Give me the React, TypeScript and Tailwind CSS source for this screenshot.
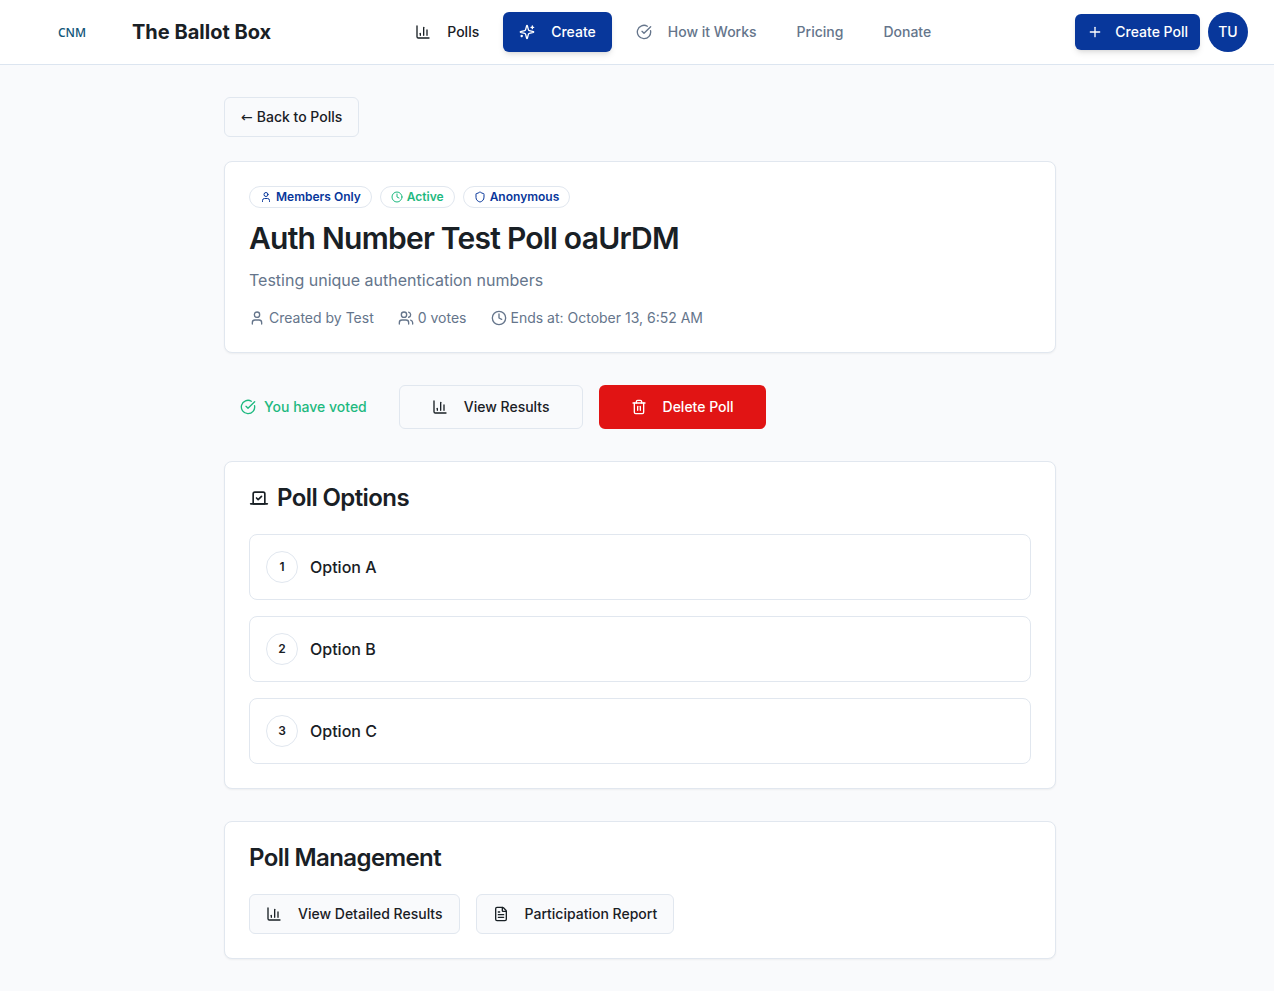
import type { ReactNode } from "react";
import {
  ChartColumn,
  CircleCheckBig,
  Clock,
  FileText,
  Plus,
  Shield,
  Trash2,
  User,
  Users,
  Vote,
} from "lucide-react";

const options = ["Option A", "Option B", "Option C"];

function SparklesIcon() {
  return (
    <svg
      width="16"
      height="16"
      viewBox="0 0 24 24"
      fill="none"
      stroke="currentColor"
      strokeWidth="2"
      strokeLinecap="round"
      strokeLinejoin="round"
      aria-hidden="true"
    >
      <path d="M9.937 15.5A2 2 0 0 0 8.5 14.063l-6.135-1.582a.5.5 0 0 1 0-.962L8.5 9.936A2 2 0 0 0 9.937 8.5l1.582-6.135a.5.5 0 0 1 .963 0L14.063 8.5A2 2 0 0 0 15.5 9.937l6.135 1.581a.5.5 0 0 1 0 .964L15.5 14.063a2 2 0 0 0-1.437 1.437l-1.582 6.135a.5.5 0 0 1-.963 0z" />
      <path d="M20 3v4" />
      <path d="M22 5h-4" />
      <path d="M4 17v2" />
      <path d="M5 18H3" />
    </svg>
  );
}

function Card({ children }: { children: ReactNode }) {
  return (
    <section className="rounded-lg border border-[#e1e7ef] bg-white p-6 shadow-xs">
      {children}
    </section>
  );
}

function Badge({ children, tone }: { children: ReactNode; tone: string }) {
  return (
    <span
      className={`flex items-center gap-1 rounded-full border border-[#e1e7ef] px-2.5 py-0.5 text-xs font-semibold ${tone}`}
    >
      {children}
    </span>
  );
}

function OutlineButton({ children, size }: { children: ReactNode; size: string }) {
  return (
    <button
      type="button"
      className={`flex items-center rounded-md border border-[#e1e7ef] bg-[#f9fafc] text-sm font-medium ${size}`}
    >
      {children}
    </button>
  );
}

export default function App() {
  return (
    <div className="min-h-screen bg-[#f9fafc] font-[Inter,sans-serif] text-[#192025]">
      <header className="flex h-[65px] items-center justify-between border-b border-[#dce5f0] bg-white pr-[26px] pl-8">
        <a href="#home" className="flex items-center gap-5">
          <span className="w-20 pt-px text-center font-['Open_Sans',sans-serif] text-xs font-semibold text-[#14587a]">
            CNM
          </span>
          <span className="text-xl font-bold">The Ballot Box</span>
        </a>
        <nav className="flex items-center gap-2 text-sm font-medium text-[#65758b]">
          <a href="#polls" className="flex h-10 items-center gap-4 px-4 text-[#192025]">
            <ChartColumn size={16} />
            Polls
          </a>
          <a
            href="#create"
            className="flex h-10 items-center gap-4 rounded-md bg-[#08379b] px-4 text-white shadow-md"
          >
            <SparklesIcon />
            Create
          </a>
          <a href="#how" className="flex h-10 items-center gap-4 px-4">
            <CircleCheckBig size={16} />
            How it Works
          </a>
          <a href="#pricing" className="flex h-10 items-center px-4">
            Pricing
          </a>
          <a href="#donate" className="flex h-10 items-center px-4">
            Donate
          </a>
        </nav>
        <div className="flex items-center gap-2 text-sm font-medium text-white">
          <button
            type="button"
            className="flex h-9 items-center gap-3 rounded-md bg-[#08379b] px-3 shadow-md"
          >
            <Plus size={16} />
            Create Poll
          </button>
          <button
            type="button"
            className="flex size-10 items-center justify-center rounded-full bg-[#08379b]"
          >
            TU
          </button>
        </div>
      </header>

      <main className="pl-1.5">
        <div className="mx-auto flex max-w-4xl flex-col gap-8 p-8">
          <div className="flex flex-col gap-6">
            <div className="flex">
              <OutlineButton size="h-10 gap-1 px-4">
                <span className="font-['DejaVu_Sans',sans-serif]">←</span>
                Back to Polls
              </OutlineButton>
            </div>
            <Card>
              <div className="flex gap-2">
                <Badge tone="text-[#08379b]">
                  <User size={12} />
                  Members Only
                </Badge>
                <Badge tone="text-[#1eb980]">
                  <Clock size={12} />
                  Active
                </Badge>
                <Badge tone="text-[#08379b]">
                  <Shield size={12} />
                  Anonymous
                </Badge>
              </div>
              <h1 className="mt-3 text-3xl font-semibold tracking-tight">
                Auth Number Test Poll oaUrDM
              </h1>
              <p className="mt-3 text-base text-[#65758b]">Testing unique authentication numbers</p>
              <div className="mt-4 flex gap-6 text-sm text-[#65758b]">
                <span className="flex items-center gap-1">
                  <User size={16} />
                  Created by Test
                </span>
                <span className="flex items-center gap-1">
                  <Users size={16} />0 votes
                </span>
                <span className="flex items-center gap-1">
                  <Clock size={16} />
                  Ends at: October 13, 6:52 AM
                </span>
              </div>
            </Card>
          </div>

          <div className="flex gap-4">
            <span className="flex items-center gap-2 px-4 text-sm font-medium text-[#1eb980]">
              <CircleCheckBig size={16} />
              You have voted
            </span>
            <OutlineButton size="h-11 gap-4 px-8">
              <ChartColumn size={16} />
              View Results
            </OutlineButton>
            <button
              type="button"
              className="flex h-11 items-center gap-4 rounded-md bg-[#e11414] px-8 text-sm font-medium text-white"
            >
              <Trash2 size={16} />
              Delete Poll
            </button>
          </div>

          <Card>
            <h2 className="flex items-center gap-2 text-2xl leading-6 font-semibold tracking-tight">
              <Vote size={20} />
              Poll Options
            </h2>
            <ol className="mt-6 flex flex-col gap-4">
              {options.map((option, index) => (
                <li
                  key={option}
                  className="flex items-center gap-3 rounded-lg border border-[#e1e7ef] p-4"
                >
                  <span className="flex size-8 items-center justify-center rounded-full border border-[#e1e7ef] text-xs font-semibold">
                    {index + 1}
                  </span>
                  <span className="font-medium">{option}</span>
                </li>
              ))}
            </ol>
          </Card>

          <Card>
            <h2 className="text-2xl leading-6 font-semibold tracking-tight">Poll Management</h2>
            <div className="mt-6 flex gap-4">
              <OutlineButton size="h-10 gap-4 px-4">
                <ChartColumn size={16} />
                View Detailed Results
              </OutlineButton>
              <OutlineButton size="h-10 gap-4 px-4">
                <FileText size={16} />
                Participation Report
              </OutlineButton>
            </div>
          </Card>
        </div>
      </main>
    </div>
  );
}
